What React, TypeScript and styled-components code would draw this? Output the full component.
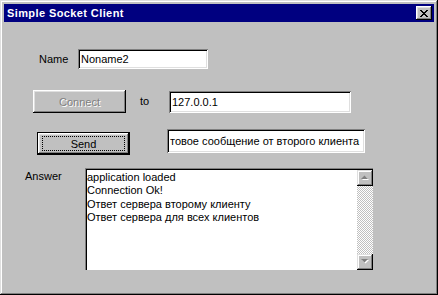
import React from "react";
import styled, { createGlobalStyle } from "styled-components";

const GlobalStyle = createGlobalStyle`
  html, body {
    margin: 0;
    padding: 0;
    background: #c0c0c0;
  }
  * {
    box-sizing: border-box;
  }
`;

const FONT = `"Liberation Sans", Arial, sans-serif`;

const Window = styled.div`
  width: 438px;
  height: 295px;
  background: #c0c0c0;
  padding: 4px;
  display: flex;
  flex-direction: column;
  font-family: ${FONT};
  font-size: 11px;
  color: #000;
  box-shadow:
    inset -1px -1px #000,
    inset 1px 1px #dfdfdf,
    inset -2px -2px #808080,
    inset 2px 2px #fff;
`;

const TitleBar = styled.div`
  height: 18px;
  background: #000080;
  color: #fff;
  display: flex;
  align-items: center;
  justify-content: space-between;
  padding: 0 2px 0 3px;
`;

const Title = styled.span`
  font-weight: bold;
  font-size: 11px;
  letter-spacing: 0.4px;
`;

const CloseButton = styled.button`
  width: 16px;
  height: 14px;
  padding: 0;
  border: none;
  background: #c0c0c0;
  display: flex;
  align-items: center;
  justify-content: center;
  box-shadow:
    inset -1px -1px #000,
    inset 1px 1px #fff,
    inset -2px -2px #808080,
    inset 2px 2px #dfdfdf;
`;

const Body = styled.div`
  flex: 1;
  display: flex;
  flex-direction: column;
`;

const Row = styled.div<{ $mt: number; $pl: number }>`
  display: flex;
  align-items: center;
  margin-top: ${(p) => p.$mt}px;
  padding-left: ${(p) => p.$pl}px;
`;

const TopRow = styled(Row)`
  align-items: flex-start;
`;

const Label = styled.span<{ $w: number; $ml?: number; $mt?: number }>`
  width: ${(p) => p.$w}px;
  margin-left: ${(p) => p.$ml ?? 0}px;
  margin-top: ${(p) => p.$mt ?? 0}px;
  line-height: 13px;
  white-space: nowrap;
`;

const Field = styled.input<{ $w: number; $h: number; $mt?: number; $ml?: number }>`
  width: ${(p) => p.$w}px;
  height: ${(p) => p.$h}px;
  margin: ${(p) => p.$mt ?? 0}px 0 0 ${(p) => p.$ml ?? 0}px;
  padding: 0 2px 0 3px;
  border: none;
  outline: none;
  background: #fff;
  font-family: ${FONT};
  font-size: 11px;
  color: #000;
  box-shadow:
    inset 1px 1px #808080,
    inset -1px -1px #fff,
    inset 2px 2px #000,
    inset -2px -2px #dfdfdf;
`;

const Button = styled.button<{ $mt?: number; $default?: boolean }>`
  width: 93px;
  height: 23px;
  margin-top: ${(p) => p.$mt ?? 0}px;
  padding: 0;
  background: #c0c0c0;
  font-family: ${FONT};
  font-size: 11px;
  color: #000;
  border: ${(p) => (p.$default ? "1px solid #000" : "none")};
  box-shadow:
    inset -1px -1px #000,
    inset 1px 1px #fff,
    inset -2px -2px #808080,
    inset 2px 2px #dfdfdf;
  display: flex;
  align-items: center;
  justify-content: center;

  &:disabled {
    color: #808080;
    text-shadow: 1px 1px #fff;
  }
`;

const FocusRing = styled.span`
  display: flex;
  align-items: center;
  justify-content: center;
  width: 83px;
  height: 15px;
  border: 1px dotted #000;
`;

const AnswerBox = styled.div`
  width: 288px;
  height: 102px;
  background: #fff;
  display: flex;
  padding: 2px 0 0 2px;
  box-shadow:
    inset 1px 1px #808080,
    inset 2px 2px #000;
`;

const AnswerText = styled.div`
  flex: 1;
  padding: 1px 0 0 0;
  line-height: 13.3px;
  white-space: nowrap;
  overflow: hidden;
`;

const ScrollBar = styled.div`
  width: 16px;
  display: flex;
  flex-direction: column;
`;

const ScrollTrack = styled.div`
  flex: 1;
  background: repeating-conic-gradient(#c0c0c0 0 25%, #fff 0 50%) 0 0 / 2px 2px;
`;

const ScrollButton = styled.div`
  width: 16px;
  height: 16px;
  background: #c0c0c0;
  display: flex;
  align-items: center;
  justify-content: center;
  box-shadow:
    inset -1px -1px #000,
    inset 1px 1px #dfdfdf,
    inset -2px -2px #808080,
    inset 2px 2px #fff;
`;

function Arrow({ up }: { up: boolean }) {
  const pts = up ? "0,4 7,4 3.5,0.5" : "0,0 7,0 3.5,3.5";
  return (
    <svg width="9" height="6" viewBox="0 0 9 6">
      <polygon points={pts} transform="translate(1,1)" fill="#fff" />
      <polygon points={pts} fill="#808080" />
    </svg>
  );
}

const lines = [
  "application loaded",
  "Connection Ok!",
  "Ответ сервера второму клиенту",
  "Ответ сервера для всех клиентов",
];

export default function App() {
  return (
    <>
      <GlobalStyle />
      <Window>
        <TitleBar>
          <Title>Simple Socket Client</Title>
          <CloseButton aria-label="Close">
            <svg width="8" height="7" viewBox="0 0 8 7" shapeRendering="crispEdges">
              <path
                d="M0 0h2v1h-2z M1 1h2v1h-2z M2 2h4v1h-4z M3 3h2v1h-2z M2 4h4v1h-4z M1 5h2v1h-2z M0 6h2v1h-2z M6 0h2v1h-2z M5 1h2v1h-2z M5 5h2v1h-2z M6 6h2v1h-2z"
                fill="#000"
              />
            </svg>
          </CloseButton>
        </TitleBar>
        <Body>
          <Row $mt={27} $pl={35}>
            <Label $w={39}>Name</Label>
            <Field $w={130} $h={20} value="Noname2" readOnly />
          </Row>
          <Row $mt={21} $pl={29}>
            <Button disabled>Connect</Button>
            <Label $w={29} $ml={14}>to</Label>
            <Field $w={182} $h={22} $mt={1} value="127.0.0.1" readOnly />
          </Row>
          <TopRow $mt={16} $pl={33}>
            <Button $mt={3} $default>
              <FocusRing>Send</FocusRing>
            </Button>
            <Field
              $w={198}
              $h={24}
              $ml={37}
              value="товое сообщение от второго клиента"
              readOnly
            />
          </TopRow>
          <TopRow $mt={13} $pl={21}>
            <Label $w={60} $mt={2}>Answer</Label>
            <AnswerBox>
              <AnswerText>
                {lines.map((l) => (
                  <div key={l}>{l}</div>
                ))}
              </AnswerText>
              <ScrollBar>
                <ScrollButton>
                  <Arrow up />
                </ScrollButton>
                <ScrollTrack />
                <ScrollButton>
                  <Arrow up={false} />
                </ScrollButton>
              </ScrollBar>
            </AnswerBox>
          </TopRow>
        </Body>
      </Window>
    </>
  );
}
